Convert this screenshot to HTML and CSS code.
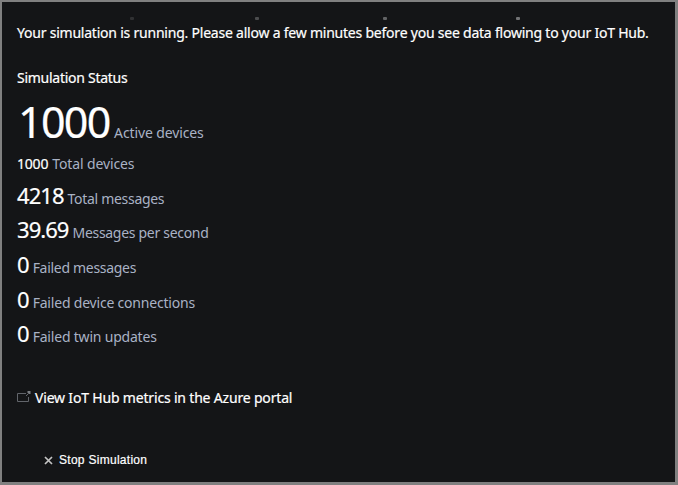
FILE: index.html
```html
<!DOCTYPE html>
<html lang="en">
<head>
<meta charset="utf-8">
<title>Simulation</title>
<link rel="stylesheet" href="styles.css">
</head>
<body>
<main class="panel">
  <div class="progress"><i class="dot dot-1"></i><i class="dot dot-2"></i><i class="dot dot-3"></i><i class="dot dot-4"></i></div>
  <p class="notice"><span class="notice-text">Your simulation is running. Please allow a few minutes before you see data flowing to your IoT Hub.</span></p>
  <h1 class="heading"><span>Simulation Status</span></h1>
  <div class="stats">
    <div class="stat stat-hero"><span class="value">1000</span><span class="label l-active">Active devices</span></div>
    <div class="stat stat-small"><span class="value">1000</span><span class="label l-total">Total devices</span></div>
    <div class="stat"><span class="value">4218</span><span class="label l-messages">Total messages</span></div>
    <div class="stat"><span class="value v-rate">39.69</span><span class="label l-rate">Messages per second</span></div>
    <div class="stat"><span class="value">0</span><span class="label l-failed">Failed messages</span></div>
    <div class="stat"><span class="value">0</span><span class="label l-conn">Failed device connections</span></div>
    <div class="stat"><span class="value">0</span><span class="label l-twin">Failed twin updates</span></div>
  </div>
  <a class="link"><svg class="link-icon" width="14" height="12" viewBox="0 0 14 12"><path d="M9 2.500H.5v8h11V6" fill="none" stroke="#62656b"/><path d="M9 5l2.500-2.500" fill="none" stroke="#62656b"/><path d="M10.500 0h3v3h-1.500L10.500 1.500z" fill="#7b7e83"/></svg><span class="link-text">View IoT Hub metrics in the Azure portal</span></a>
  <div class="stop"><svg class="stop-icon" width="9" height="9" viewBox="0 0 9 9"><path d="M1 1l7 7M8 1L1 8" stroke="#c4c4c4" stroke-width="1.700"/></svg><span class="stop-text">Stop Simulation</span></div>
</main>
</body>
</html>
```
FILE: styles.css
```css
* { box-sizing: border-box; }
body { margin: 0; background: #808080; }
.panel {
  width: 678px; height: 485px; padding: 15px 15px 0;
  border: 2px solid #808080; border-right-width: 3px; border-bottom-width: 3px;
  background: #141517; color: #fff;
  font: 14px/20px "Noto Sans", sans-serif;
  white-space: nowrap; overflow: hidden;
  -webkit-text-stroke: 0.2px;
}
.progress { display: flex; height: 3px; padding-left: 113px; }
.dot { width: 4px; height: 3px; border-radius: 1px; background: #303133; }
.dot-2 { margin-left: 121px; background: #4b4c4e; }
.dot-3 { margin-left: 124px; background: #626365; }
.dot-4 { margin-left: 129px; background: #727375; }
.notice { margin: 3px 0 0; letter-spacing: -0.22px; }
.heading { margin: 25px 0 0; font: inherit; letter-spacing: -0.27px; }
.stats { padding-top: 7px; }
.stat { display: flex; align-items: baseline; height: 34.7px; line-height: 34px; }
.value { font-size: 22px; letter-spacing: -0.95px; margin-right: 4px; }
.stat-hero { height: 54px; line-height: 54px; }
.stat-hero .value { font-size: 43px; letter-spacing: -1.700px; margin-left: 1px; margin-right: 4.5px; }
.stat-small { height: 28.6px; line-height: 30px; }
.stat-small .value { font-size: 14px; letter-spacing: -0.2px; }
.label { color: #a9b2c5; letter-spacing: -0.3px; -webkit-text-stroke: 0; }
.l-active, .l-total { letter-spacing: -0.12px; }
.l-conn, .l-twin { letter-spacing: -0.2px; }
.link { display: flex; align-items: center; margin-top: 37.4px; height: 20px; letter-spacing: -0.18px; }
.link-icon { margin: -2px 4px 0 0; }
.stop { display: flex; align-items: center; margin: 42px 0 0 27px; height: 20px; font: 12px/20px "Liberation Sans", sans-serif; letter-spacing: 0.28px; }
.stop-icon { margin: 1px 6px 0 0; }
```
